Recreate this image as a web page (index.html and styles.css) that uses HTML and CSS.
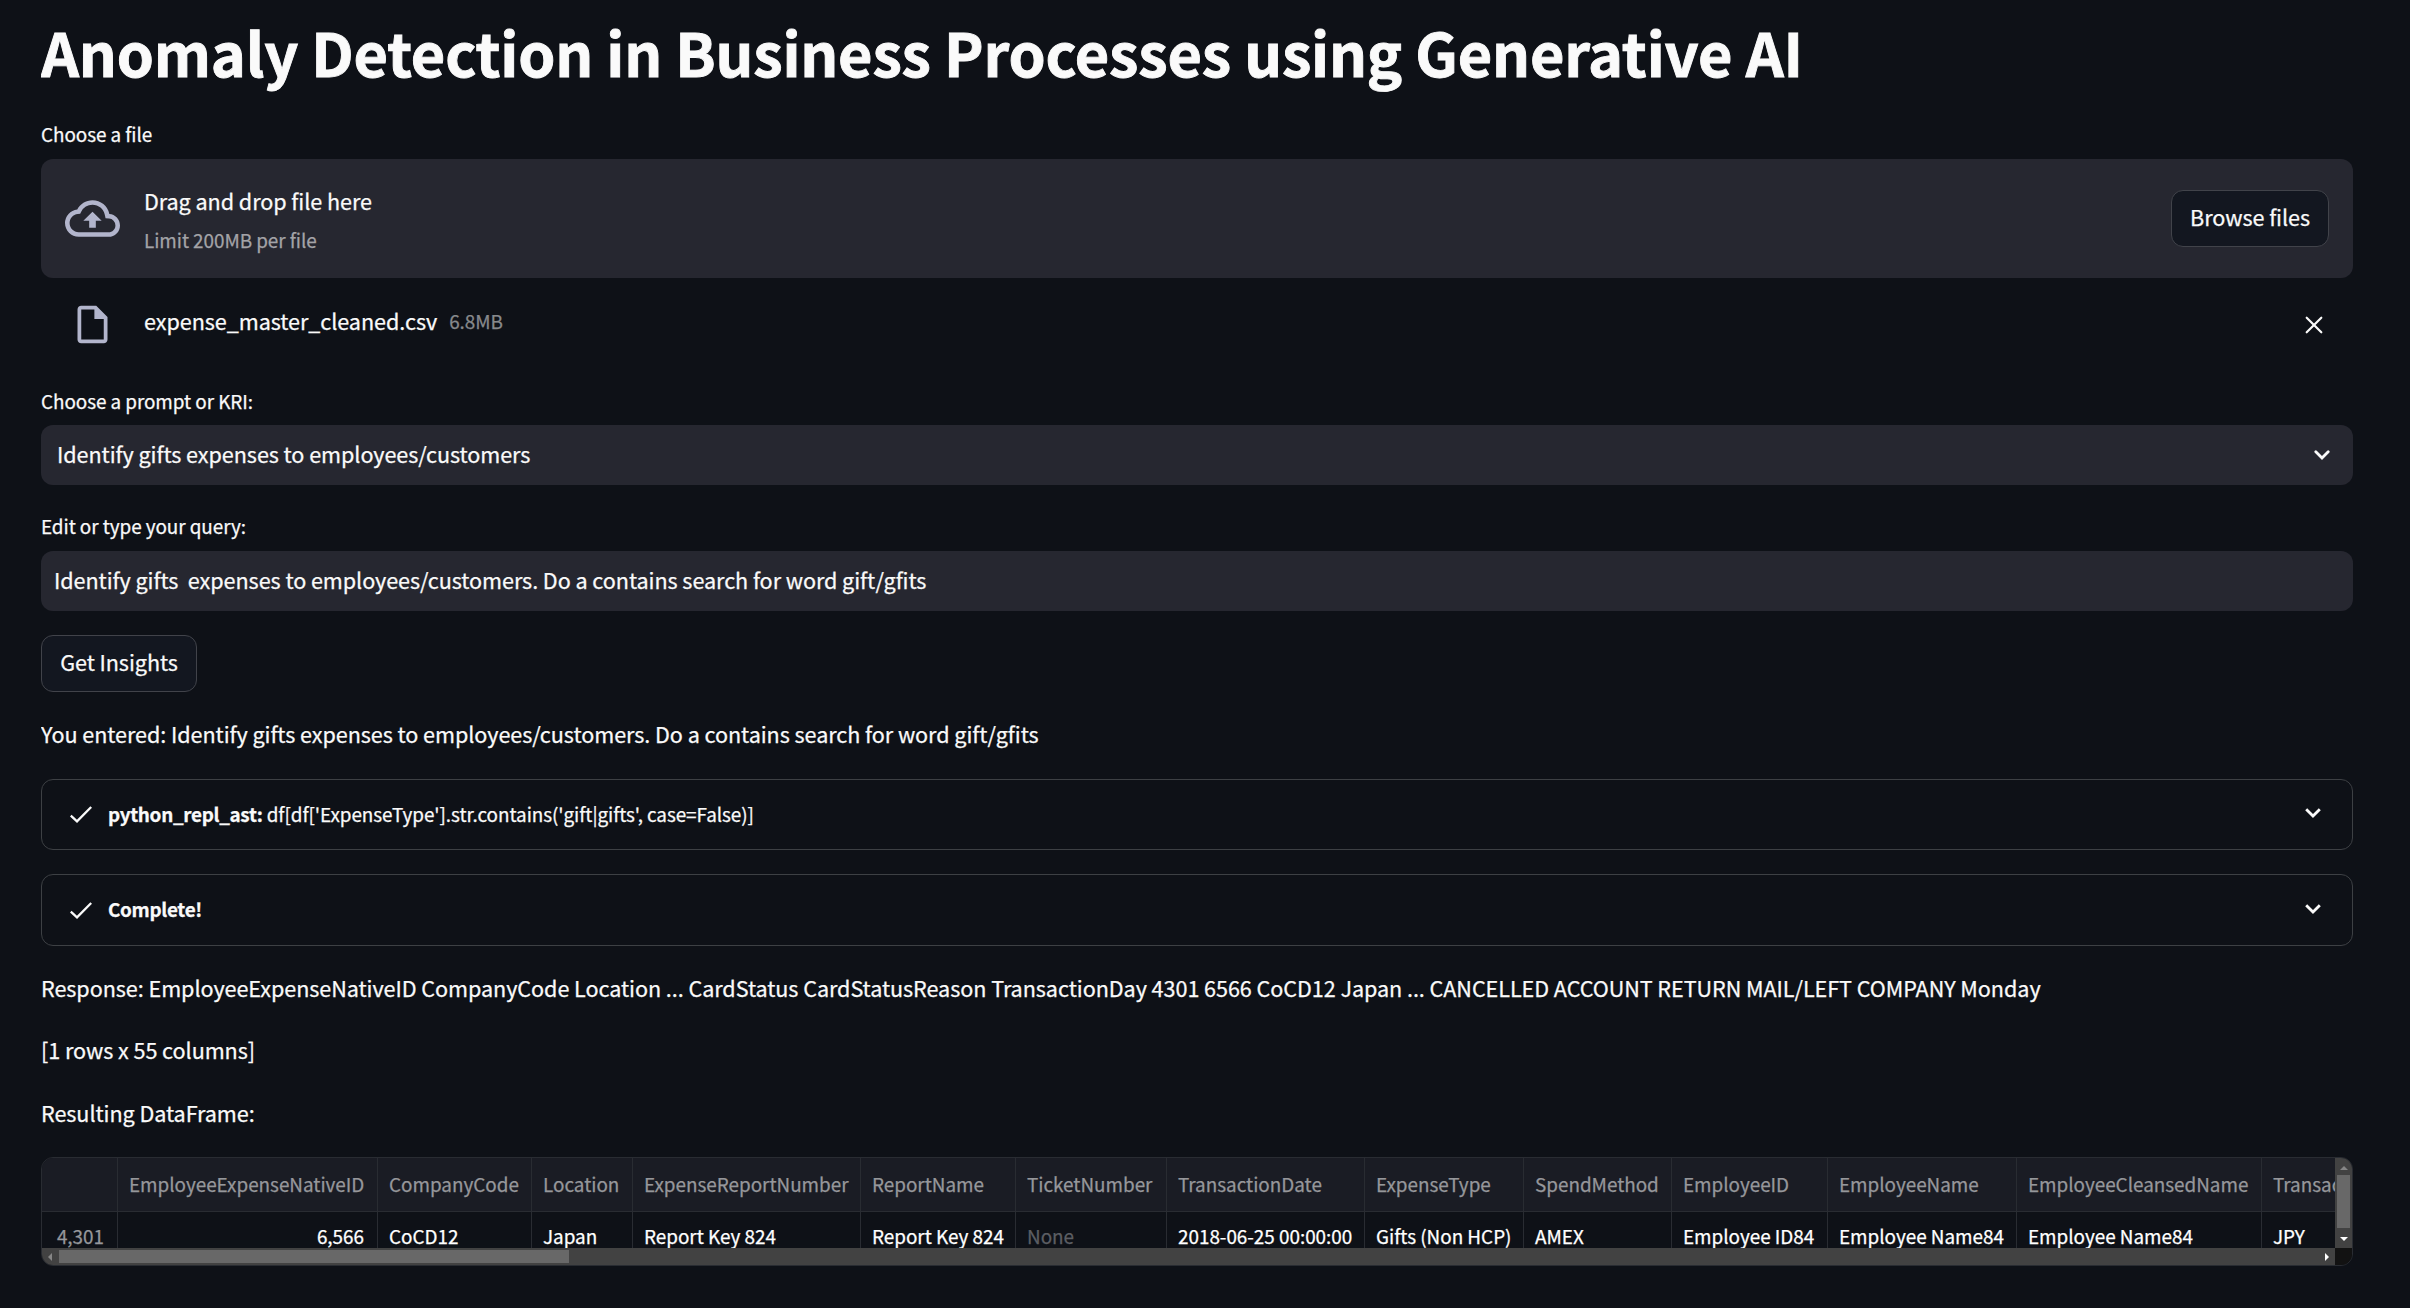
FILE: index.html
```html
<!DOCTYPE html>
<html lang="en">
<head>
<meta charset="utf-8">
<title>Anomaly Detection in Business Processes using Generative AI</title>
<link rel="stylesheet" href="styles.css">
</head>
<body>
<main class="page">
  <h1 class="title"><span>Anomaly Detection in Business Processes using Generative AI</span></h1>

  <div class="label"><span>Choose a file</span></div>
  <section class="dropzone">
    <svg class="cloud" viewBox="0 0 24 24" fill="currentColor"><path d="M19.35 10.04A7.49 7.49 0 0 0 12 4C9.11 4 6.6 5.64 5.35 8.04A5.994 5.994 0 0 0 0 14c0 3.31 2.69 6 6 6h13c2.76 0 5-2.24 5-5 0-2.64-2.05-4.78-4.65-4.96zM19 18H6c-2.21 0-4-1.79-4-4 0-2.05 1.53-3.76 3.56-3.97l1.07-.11.5-.95A5.469 5.469 0 0 1 12 6c2.62 0 4.88 1.86 5.39 4.43l.3 1.5 1.53.11A2.98 2.98 0 0 1 22 15c0 1.65-1.35 3-3 3zM8 13h2.55v3h2.9v-3H16l-4-4z"/></svg>
    <div class="drop-text">
      <div class="drop-main"><span>Drag and drop file here</span></div>
      <div class="drop-sub"><span>Limit 200MB per file</span></div>
    </div>
    <button class="btn browse"><span>Browse files</span></button>
  </section>
  <div class="file">
    <svg class="file-icon" viewBox="0 0 24 24" fill="currentColor"><path d="M14 2H6c-1.1 0-1.99.9-1.99 2L4 20c0 1.1.89 2 1.99 2H18c1.1 0 2-.9 2-2V8l-6-6zM6 20V4h7v5h5v11H6z"/></svg>
    <div class="file-name"><span>expense_master_cleaned.csv</span></div>
    <div class="file-size"><span>6.8MB</span></div>
    <svg class="close" viewBox="0 0 18 18" fill="none" stroke="currentColor" stroke-width="2.2" stroke-linecap="round"><path d="M1.7 1.7l14.6 14.6M16.3 1.7L1.7 16.3"/></svg>
  </div>

  <div class="label prompt"><span>Choose a prompt or KRI:</span></div>
  <div class="field select">
    <span>Identify gifts expenses to employees/customers</span>
    <svg class="chevron" viewBox="0 0 16 10" fill="none" stroke="currentColor" stroke-width="2.8" stroke-linecap="round"><path d="M1.8 1.8L8 8l6.2-6.2"/></svg>
  </div>

  <div class="label query"><span>Edit or type your query:</span></div>
  <div class="field input"><span>Identify gifts&nbsp; expenses to employees/customers. Do a contains search for word gift/gfits</span></div>

  <button class="btn insights"><span>Get Insights</span></button>

  <p class="text entered"><span>You entered: Identify gifts expenses to employees/customers. Do a contains search for word gift/gfits</span></p>

  <div class="status">
    <svg class="check" viewBox="0 0 22 17" fill="none" stroke="currentColor" stroke-width="2.3"><path d="M.8 9.6l6.2 5.8L21.2 1"/></svg>
    <span class="status-text"><b>python_repl_ast:</b> df[df['ExpenseType'].str.contains('gift|gifts', case=False)]</span>
    <svg class="chevron" viewBox="0 0 16 10" fill="none" stroke="currentColor" stroke-width="2.8"><path d="M1.2 1.2L8 8l6.8-6.8"/></svg>
  </div>
  <div class="status complete">
    <svg class="check" viewBox="0 0 22 17" fill="none" stroke="currentColor" stroke-width="2.3"><path d="M.8 9.6l6.2 5.8L21.2 1"/></svg>
    <span class="status-text"><b>Complete!</b></span>
    <svg class="chevron" viewBox="0 0 16 10" fill="none" stroke="currentColor" stroke-width="2.8"><path d="M1.2 1.2L8 8l6.8-6.8"/></svg>
  </div>

  <p class="text response"><span>Response: EmployeeExpenseNativeID CompanyCode Location ... CardStatus CardStatusReason TransactionDay 4301 6566 CoCD12 Japan ... CANCELLED ACCOUNT RETURN MAIL/LEFT COMPANY Monday</span></p>
  <p class="text"><span>[1 rows x 55 columns]</span></p>
  <p class="text result"><span>Resulting DataFrame:</span></p>

  <section class="frame">
    <div class="grid">
      <div class="row head">
        <div class="cell"></div><div class="cell">EmployeeExpenseNativeID</div><div class="cell">CompanyCode</div><div class="cell">Location</div><div class="cell">ExpenseReportNumber</div><div class="cell">ReportName</div><div class="cell">TicketNumber</div><div class="cell">TransactionDate</div><div class="cell">ExpenseType</div><div class="cell">SpendMethod</div><div class="cell">EmployeeID</div><div class="cell">EmployeeName</div><div class="cell">EmployeeCleansedName</div><div class="cell">Transac</div>
      </div>
      <div class="row data">
        <div class="cell index">4,301</div><div class="cell num">6,566</div><div class="cell">CoCD12</div><div class="cell">Japan</div><div class="cell">Report Key 824</div><div class="cell">Report Key 824</div><div class="cell none">None</div><div class="cell">2018-06-25 00:00:00</div><div class="cell">Gifts (Non HCP)</div><div class="cell">AMEX</div><div class="cell">Employee ID84</div><div class="cell">Employee Name84</div><div class="cell">Employee Name84</div><div class="cell">JPY</div>
      </div>
    </div>
    <div class="vbar">
      <svg class="up" viewBox="0 0 8 4"><path d="M0 4l4-4 4 4z" fill="#868686"/></svg>
      <div class="vthumb"></div>
      <svg class="down" viewBox="0 0 8 4"><path d="M0 0l4 4 4-4z" fill="#fff"/></svg>
    </div>
    <div class="hbar">
      <svg class="left" viewBox="0 0 4 8"><path d="M4 0L0 4l4 4z" fill="#868686"/></svg>
      <div class="hthumb"></div>
      <svg class="right" viewBox="0 0 4 8"><path d="M0 0l4 4-4 4z" fill="#fff"/></svg>
    </div>
    <div class="corner"></div>
  </section>
</main>
</body>
</html>
```
FILE: styles.css
```css
* { box-sizing: border-box; }
body {
  margin: 0;
  background: #0e1117;
  color: #fafafa;
  font-family: "Noto Sans CJK SC", "Noto Sans", sans-serif;
  font-size: 21.6px;
  line-height: 38px;
  letter-spacing: -0.062px;
  -webkit-text-stroke: 0.25px currentColor;
}
svg { display: block; flex: none; }
.page {
  display: flex;
  flex-direction: column;
  width: 2312px;
  height: 1308px;
  margin-left: 41px;
  padding-top: 12px;
  overflow: hidden;
  white-space: nowrap;
}
.title { margin: 0; font-size: 59.4px; line-height: 79px; font-weight: 700; letter-spacing: -0.2px; -webkit-text-stroke-width: 0.9px; }
.label { font-size: 18.9px; line-height: 32px; margin: 27px 0 9px; }
.dropzone {
  display: flex;
  align-items: center;
  height: 119px;
  padding: 0 24px;
  border-radius: 12px;
  background: #262730;
}
.cloud { width: 55px; height: 55px; margin-right: 24px; color: #b2b5cc; }
.drop-text { flex: 1; line-height: 39px; padding-top: 2px; }
.drop-sub { font-size: 18.9px; color: #a3a3a7; }
.btn {
  height: 57px;
  padding: 0 17px 3px;
  border: 1px solid #41434a;
  border-radius: 12px;
  background: #131720;
  color: #fafafa;
  font: inherit;
  letter-spacing: inherit;
}
.browse { width: 158px; }
.file { display: flex; height: 94px; padding-left: 29px; align-items: center; }
.file-icon { width: 45px; height: 45px; margin: 0 29px 1px 0; color: #b2b5cc; }
.file-name { margin: 0 12px 8px 0; }
.file-size { flex: 1; margin-bottom: 8px; font-size: 18.9px; color: #87898c; }
.close { width: 18px; height: 18px; margin-right: 30px; }
.prompt { margin: 13px 0 8px; }
.field {
  display: flex;
  align-items: center;
  justify-content: space-between;
  height: 60px;
  border-radius: 12px;
  background: #262730;
}
.chevron { width: 16px; height: 10px; }
.select { padding: 0 23px 2px 16px; }
.select .chevron { margin-top: 2px; }
.query { margin-top: 25px; }
.input { padding: 0 13px 3px; }
.insights { align-self: flex-start; width: 156px; margin-top: 24px; }
.text { margin: 24px 0 0; }
.entered { margin-top: 23px; }
.status {
  display: flex;
  align-items: center;
  height: 71px;
  margin-top: 26px;
  padding: 0 31px 0 28px;
  border: 1px solid #3d4044;
  border-radius: 12px;
  font-size: 18.9px;
}
.status b { letter-spacing: -0.32px; }
.check { width: 22px; height: 17px; }
.status-text { flex: 1; margin: 0 0 1px 16px; }
.status .chevron { margin-bottom: 3px; }
.complete { height: 72px; margin-top: 24px; }
.complete .status-text { margin-bottom: 3px; }
.response { margin-top: 23px; }
.result { margin-top: 25px; }
.frame {
  display: grid;
  grid-template-columns: 1fr 17px;
  grid-template-rows: 90px 17px;
  height: 109px;
  margin-top: 25px;
  border: 1px solid #292c32;
  border-radius: 12px;
  overflow: hidden;
}
.grid { overflow: hidden; font-size: 18.9px; letter-spacing: -0.02px; }
.row {
  display: grid;
  grid-template-columns: 76px 260px 154px 101px 228px 155px 151px 198px 159px 148px 156px 189px 245px 74px;
}
.cell { padding-left: 11px; border-right: 1px solid #292c32; }
.cell:last-child { border-right: 0; overflow: hidden; }
.head { height: 54px; line-height: 52px; background: #1a1c24; color: #96979b; }
.head .cell { border-bottom: 1px solid #292c32; }
.data { height: 52px; line-height: 48px; color: #fff; }
.data .index, .data .num { text-align: right; padding-right: 13px; }
.data .index { color: #96979b; }
.data .none { color: #5c5e63; }
.vbar { background: #424242; display: flex; flex-direction: column; align-items: center; }
.up, .down { width: 8px; height: 4px; }
.up { margin: 8px 0 5px; }
.vthumb { width: 13px; height: 53px; background: #686868; margin-bottom: 9px; }
.hbar { background: #424242; display: flex; align-items: center; }
.left, .right { width: 4px; height: 8px; }
.left { margin: 0 7px 0 6px; }
.hthumb { width: 510px; height: 13px; background: #686868; }
.right { margin: 0 6px 0 auto; }
.corner { background: #121212; }
```
